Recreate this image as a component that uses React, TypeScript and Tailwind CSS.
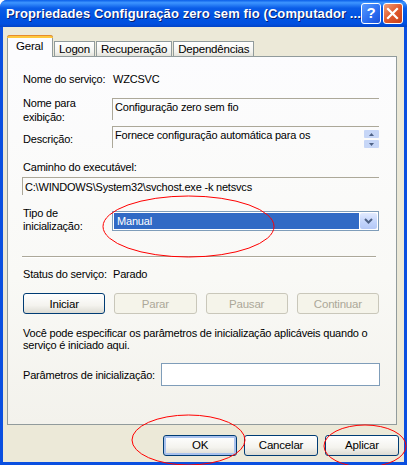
import React from "react";

// XP-style service properties dialog
const font = "font-['Tahoma','Liberation_Sans',Arial,sans-serif]";

const XpButton = ({ label, disabled, isDefault }: { label: string; disabled?: boolean; isDefault?: boolean }) => (
  <div
    className={
      "flex h-[21px] items-center justify-center rounded-[3px] border text-[11.5px] " +
      (disabled
        ? "border-[#c9c7ba] bg-[#f5f4ea] text-[#aca899]"
        : "border-[#003c74] bg-[linear-gradient(180deg,#ffffff_0%,#f4f3ee_60%,#dcdbd3_100%)] text-black") +
      (isDefault ? " shadow-[inset_0_0_0_2px_#a9c2ee]" : "")
    }
  >
    {label}
  </div>
);

const Tab = ({ label, active }: { label: string; active?: boolean }) =>
  active ? (
    <div className="relative z-10 -mb-px flex h-[22px] w-[46px] flex-col rounded-t-[3px] border border-b-0 border-[#919b9c] bg-[#fcfcfe]">
      <div className="-mx-px -mt-px h-[3px] rounded-t-[3px] border-t border-[#e68b2c] bg-[#ffc83c]" />
      <div className="pl-[8px] pt-[1px] text-[11.5px] leading-[14px]">{label}</div>
    </div>
  ) : (
    <div className="ml-px flex h-[15px] items-center whitespace-nowrap border border-b-0 border-[#919b9c] bg-[linear-gradient(180deg,#ffffff_0%,#f3f3ef_70%,#e3e2da_100%)] px-[4px] text-[11.5px] leading-[14px]">
      {label}
    </div>
  );

const Ellipses = () => (
  <svg className="pointer-events-none absolute inset-0" width="407" height="465" viewBox="0 0 407 465">
    <ellipse cx="188.5" cy="226.5" rx="85.5" ry="30.5" fill="none" stroke="#ff0000" strokeWidth="1" />
    <ellipse cx="188.5" cy="440" rx="56.5" ry="25" fill="none" stroke="#ff0000" strokeWidth="1" />
    <ellipse cx="365" cy="446" rx="41" ry="21" fill="none" stroke="#ff0000" strokeWidth="1" />
  </svg>
);

export default function App() {
  return (
    <div className={"relative flex h-[465px] w-[407px] flex-col overflow-hidden rounded-t-[7px] bg-[#0a4fe0] text-[11px] tracking-[-0.2px] text-black " + font}>
      {/* Title bar */}
      <div className="flex h-[27px] shrink-0 items-center bg-[linear-gradient(180deg,#0a5ee8_0%,#3d95ff_10%,#0a5de8_30%,#0054e3_60%,#0150e0_88%,#0343c6_100%)] pl-[6px] pr-[4px] tracking-normal">
        <div className="flex-1 whitespace-nowrap font-['Liberation_Sans',Arial,sans-serif] text-[13px] font-bold tracking-[0.1px] text-white [text-shadow:1px_1px_0_#0a1e6e]">
          Propriedades Configuração zero sem fio (Computador ...
        </div>
        <div className="mr-[2px] flex h-[21px] w-[21px] items-center justify-center rounded-[3px] border border-white bg-[linear-gradient(135deg,#5a9bff_0%,#2a6cf0_60%,#1c50d8_100%)] font-['Liberation_Sans',sans-serif] text-[15px] font-bold text-white">
          ?
        </div>
        <div className="flex h-[21px] w-[21px] items-center justify-center rounded-[3px] border border-white bg-[linear-gradient(135deg,#f0a07a_0%,#e05a2e_50%,#c8401a_100%)]">
          <svg width="13" height="13" viewBox="0 0 13 13">
            <path d="M2 2 L11 11 M11 2 L2 11" stroke="#ffffff" strokeWidth="2.2" strokeLinecap="square" />
          </svg>
        </div>
      </div>

      {/* Body */}
      <div className="mx-[3px] mb-[3px] flex flex-1 flex-col bg-[#ece9d8] pl-[4px] pr-[5px] pt-[8px]">
        <div className="flex h-[21px] items-end">
          <Tab label="Geral" active />
          <Tab label="Logon" />
          <Tab label="Recuperação" />
          <Tab label="Dependências" />
        </div>

        {/* Tab panel */}
        <div className="flex h-[369px] w-[390px] flex-col whitespace-nowrap border border-[#919b9c] bg-[linear-gradient(180deg,#fcfcfe_0%,#f9f9f6_60%,#f3f2ec_100%)] pl-[15px] pr-[17px] pt-[15px] leading-[14px]">
          <div className="flex h-[14px]">
            <div className="w-[90px]">Nome do serviço:</div>
            <div>WZCSVC</div>
          </div>

          <div className="mt-[12px] flex h-[22px]">
            <div className="-mt-[2px] w-[89px]">
              Nome para
              <br />
              exibição:
            </div>
            <div className="flex-1 border-l border-t border-[#aca899] pl-[2px] pt-[1px]">Configuração zero sem fio</div>
          </div>

          <div className="mt-[6px] flex h-[22px]">
            <div className="mt-[6px] w-[89px]">Descrição:</div>
            <div className="flex flex-1 border-l border-t border-[#aca899] pl-[2px] pt-[1px]">
              <div className="flex-1">Fornece configuração automática para os</div>
              <div className="mt-[2px] flex w-[15px] flex-col gap-[2px]">
                <div className="flex h-[8px] items-center justify-center rounded-[1px] bg-[#c6d6f7]">
                  <svg width="5" height="3" viewBox="0 0 5 3"><path d="M0 3 L2.5 0 L5 3 Z" fill="#4d6185" /></svg>
                </div>
                <div className="flex h-[8px] items-center justify-center rounded-[1px] bg-[#c6d6f7]">
                  <svg width="5" height="3" viewBox="0 0 5 3"><path d="M0 0 L2.5 3 L5 0 Z" fill="#4d6185" /></svg>
                </div>
              </div>
            </div>
          </div>

          <div className="mt-[12px]">Caminho do executável:</div>
          <div className="-ml-px mt-[3px] h-[18px] border-l border-t border-[#aca899] pl-[2px] pt-[2px]">
            C:\WINDOWS\System32\svchost.exe -k netsvcs
          </div>

          <div className="mt-[16px] flex h-[20px]">
            <div className="-mt-[4px] w-[89px] leading-[13px]">
              Tipo de
              <br />
              inicialização:
            </div>
            <div className="flex flex-1 items-center border border-[#7f9db9] bg-white p-px">
              <div className="flex h-full flex-1 items-center bg-[#316ac5] pl-[3px] text-white">Manual</div>
              <div className="ml-[1px] flex h-full w-[17px] items-center justify-center rounded-[2px] bg-[linear-gradient(180deg,#e1eafe_0%,#c1d3fb_60%,#b4c8f6_100%)]">
                <svg width="9" height="6" viewBox="0 0 9 6">
                  <path d="M1 1 L4.5 4.5 L8 1" fill="none" stroke="#4d6185" strokeWidth="2" />
                </svg>
              </div>
            </div>
          </div>

          <div className="-ml-px mr-[3px] mt-[25px] h-[2px] border-b border-t border-b-white border-t-[#aca899]" />

          <div className="mt-[9px] flex h-[14px]">
            <div className="w-[90px]">Status do serviço:</div>
            <div>Parado</div>
          </div>

          <div className="mt-[12px] grid grid-cols-4 gap-[9px]">
            <XpButton label="Iniciar" />
            <XpButton label="Parar" disabled />
            <XpButton label="Pausar" disabled />
            <XpButton label="Continuar" disabled />
          </div>

          <div className="mt-[13px] leading-[12px]">
            Você pode especificar os parâmetros de inicialização aplicáveis quando o
            <br />
            serviço é iniciado aqui.
          </div>

          <div className="mt-[12px] flex h-[23px] items-center">
            <div className="w-[138px]">Parâmetros de inicialização:</div>
            <div className="-mr-px h-full flex-1 border border-[#7f9db9] bg-white" />
          </div>
        </div>

        {/* Dialog buttons */}
        <div className="mt-[10px] flex justify-end gap-[7px]">
          <div className="w-[74px]"><XpButton label="OK" isDefault /></div>
          <div className="w-[74px]"><XpButton label="Cancelar" /></div>
          <div className="w-[74px]"><XpButton label="Aplicar" /></div>
        </div>
      </div>

      <Ellipses />
    </div>
  );
}
